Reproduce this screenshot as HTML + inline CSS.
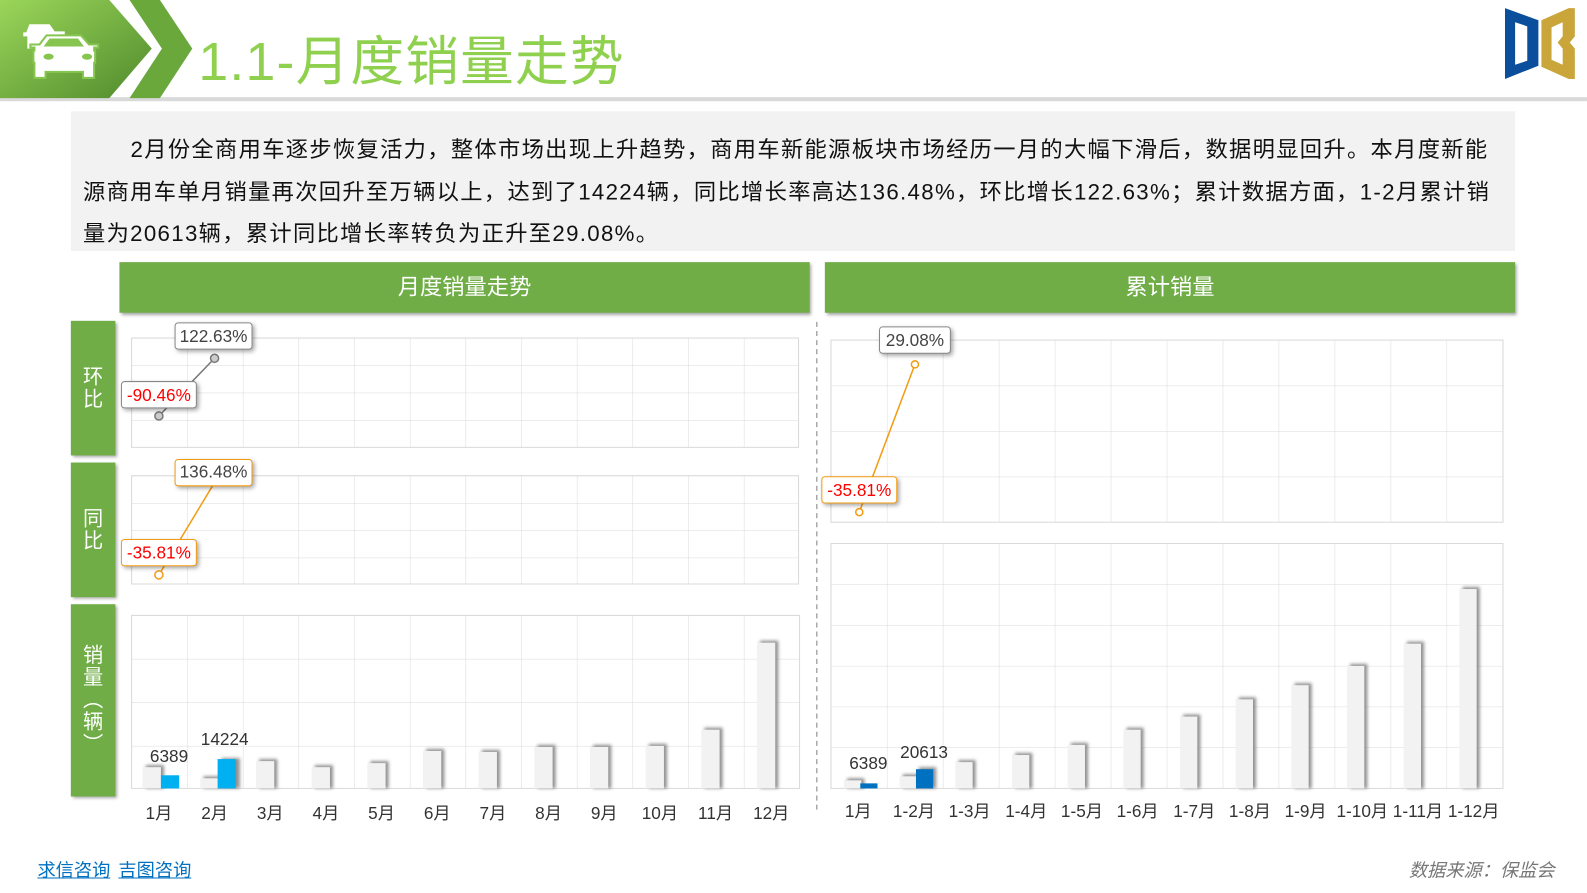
<!DOCTYPE html>
<html><head><meta charset="utf-8">
<style>
body{margin:0;width:1587px;height:892px;background:#fff;position:relative;overflow:hidden;font-family:"Liberation Sans","Noto Sans CJK SC",sans-serif;}
#w{position:absolute;left:0;top:0;width:1568px;height:882px;transform:scale(1.0121);transform-origin:0 0;}
.abs{position:absolute}
.txt{left:70px;top:110px;width:1427px;height:138px;background:#f2f2f2;}
.txt p{margin:0;position:absolute;left:12px;top:17px;white-space:nowrap;font-size:22px;line-height:41.5px;color:#111;letter-spacing:1.3px;}
.hdr{background:#70ad47;color:#fff;font-size:22px;text-align:center;line-height:50px;box-shadow:2px 2px 3px rgba(0,0,0,.35);}
.side{background:#70ad47;color:#fff;font-size:20px;width:44px;text-align:center;line-height:22px;display:flex;align-items:center;justify-content:center;box-shadow:2px 2px 3px rgba(0,0,0,.35);}
</style></head><body><div id="w">
<svg class="abs" style="left:0;top:0" width="1568" height="110">
<defs><linearGradient id="g" x1="0" y1="0" x2="1" y2="1"><stop offset="0" stop-color="#9bd65a"/><stop offset="1" stop-color="#4f8a2c"/></linearGradient></defs>
<rect x="0" y="96" width="1568" height="4" fill="#d9d9d9"/>
<polygon points="0,0 108,0 150,48 108,97 0,97" fill="url(#g)"/>
<polygon points="128,0 158,0 190,48 158,97 128,97 160,48" fill="#6aa83c"/>
<g fill="#fff">
<path d="M29 24 h20 l5 7 h10 v3 h-4 v14 h-6 v-3 h-22 v3 h-5 v-12 h-4 v-4 h3z"/>
<path d="M46 35 h34 l8 9 h9 v3 h-4 v3 h1 v12 h-1 v15 h-11 v-6 h-37 v6 h-11 v-15 h-1 v-12 h1 v-3 h-4 v-3 h9z" stroke="#86c54f" stroke-width="2"/>
<path d="M49 38 h28 l6 8 h-40z" fill="#86c54f"/>
<ellipse cx="48" cy="56" rx="5" ry="3" fill="#86c54f"/><ellipse cx="86" cy="56" rx="5" ry="3" fill="#86c54f"/>
</g>
<text x="196" y="79" font-size="53" letter-spacing="1.2" fill="#8fd14f" font-family="Liberation Sans,Noto Sans CJK SC,sans-serif">1.1-月度销量走势</text>
<path d="M1487 8 l33 12 v45 l-33 13z M1497 22 v42 l12 -4 v-34z" fill="#0b4f9c" fill-rule="evenodd"/>
<path d="M1523 20 l27 -12 h6 v28 l-5 6 l5 6 v30 h-6 l-27 -12z M1533 27 v32 l11 5 v-16 l-5 -6 l5 -6 v-14z" fill="#c9a53a" fill-rule="evenodd"/>
</svg>
<div class="abs txt"><p><span style="display:inline-block;width:47px"></span>2月份全商用车逐步恢复活力，整体市场出现上升趋势，商用车新能源板块市场经历一月的大幅下滑后，数据明显回升。本月度新能<br>源商用车单月销量再次回升至万辆以上，达到了14224辆，同比增长率高达136.48%，环比增长122.63%；累计数据方面，1-2月累计销<br>量为20613辆，累计同比增长率转负为正升至29.08%。</p></div>
<div class="abs hdr" style="left:118px;top:259px;width:682px;height:50px">月度销量走势</div>
<div class="abs hdr" style="left:815px;top:259px;width:682px;height:50px">累计销量</div>
<div class="abs side" style="left:70px;top:317px;height:133px">环<br>比</div>
<div class="abs side" style="left:70px;top:457px;height:133px">同<br>比</div>
<div class="abs side" style="left:70px;top:597px;height:190px">销<br>量<br>︵<br>辆<br>︶</div>
<svg class="abs" style="left:0;top:310px" width="1568" height="510" viewBox="0 310 1568 510">
<defs>
<pattern id="p1" x="130" y="334" width="55" height="27" patternUnits="userSpaceOnUse"><path d="M0 0 V27 M0 0 H55" stroke="#d9d9d9" fill="none"/></pattern>
<pattern id="p2" x="130" y="470" width="55" height="27" patternUnits="userSpaceOnUse"><path d="M0 0 V27 M0 0 H55" stroke="#d9d9d9" fill="none"/></pattern>
<pattern id="p3" x="130" y="608" width="55" height="43" patternUnits="userSpaceOnUse"><path d="M0 0 V43 M0 0 H55" stroke="#d9d9d9" fill="none"/></pattern>
<pattern id="p4" x="821" y="336" width="55.3" height="45" patternUnits="userSpaceOnUse"><path d="M0 0 V45 M0 0 H55.3" stroke="#d9d9d9" fill="none"/></pattern>
<pattern id="p5" x="821" y="537" width="55.3" height="40.3" patternUnits="userSpaceOnUse"><path d="M0 0 V40.3 M0 0 H55.3" stroke="#d9d9d9" fill="none"/></pattern>
<filter id="sh"><feGaussianBlur stdDeviation="1.5"/></filter>
</defs>
<rect x="130" y="334" width="659" height="108" fill="url(#p1)" stroke="#d9d9d9"/>
<rect x="130" y="470" width="659" height="107" fill="url(#p2)" stroke="#d9d9d9"/>
<rect x="130" y="608" width="660" height="171" fill="url(#p3)" stroke="#d9d9d9"/>
<rect x="821" y="336" width="664" height="180" fill="url(#p4)" stroke="#d9d9d9"/>
<rect x="821" y="537" width="664" height="242" fill="url(#p5)" stroke="#d9d9d9"/>
<line x1="807" y1="318" x2="807" y2="800" stroke="#aaa" stroke-width="1.5" stroke-dasharray="5,4"/>
<g fill="#777" filter="url(#sh)" opacity=".8">
<rect x="144" y="756" width="18" height="23"/><rect x="201" y="767" width="18" height="12"/><rect x="256" y="750" width="18" height="29"/><rect x="311" y="756" width="18" height="23"/><rect x="366" y="752" width="18" height="27"/><rect x="421" y="740" width="18" height="39"/><rect x="476" y="741" width="18" height="38"/><rect x="531" y="736" width="18" height="43"/><rect x="586" y="736" width="18" height="43"/><rect x="641" y="735" width="18" height="44"/><rect x="696" y="719" width="18" height="60"/><rect x="751" y="633" width="18" height="146"/>
<rect x="219" y="749" width="18" height="30"/>
</g>
<g fill="#f2f2f2">
<rect x="141" y="758" width="18" height="21"/><rect x="198" y="769" width="18" height="10"/><rect x="253" y="752" width="18" height="27"/><rect x="308" y="758" width="18" height="21"/><rect x="363" y="754" width="18" height="25"/><rect x="418" y="742" width="18" height="37"/><rect x="473" y="743" width="18" height="36"/><rect x="528" y="738" width="18" height="41"/><rect x="583" y="738" width="18" height="41"/><rect x="638" y="737" width="18" height="42"/><rect x="693" y="721" width="18" height="58"/><rect x="748" y="635" width="18" height="144"/>
</g>
<rect x="159" y="766" width="18" height="13" fill="#00b0f0"/>
<rect x="215" y="750" width="18" height="29" fill="#00b0f0"/>
<g fill="#777" filter="url(#sh)" opacity=".8">
<rect x="837" y="769" width="17" height="10"/><rect x="892" y="765" width="17" height="14"/><rect x="947" y="751" width="17" height="28"/><rect x="1003" y="744" width="17" height="35"/><rect x="1058" y="734" width="17" height="45"/><rect x="1113" y="719" width="17" height="60"/><rect x="1169" y="706" width="17" height="73"/><rect x="1224" y="689" width="17" height="90"/><rect x="1279" y="675" width="17" height="104"/><rect x="1334" y="656" width="17" height="123"/><rect x="1390" y="634" width="17" height="145"/><rect x="1445" y="580" width="17" height="199"/><rect x="908" y="758" width="17" height="21"/>
</g>
<g fill="#f2f2f2">
<rect x="834" y="771" width="17" height="8"/><rect x="889" y="767" width="17" height="12"/><rect x="944" y="753" width="17" height="26"/><rect x="1000" y="746" width="17" height="33"/><rect x="1055" y="736" width="17" height="43"/><rect x="1110" y="721" width="17" height="58"/><rect x="1166" y="708" width="17" height="71"/><rect x="1221" y="691" width="17" height="88"/><rect x="1276" y="677" width="17" height="102"/><rect x="1331" y="658" width="17" height="121"/><rect x="1387" y="636" width="17" height="143"/><rect x="1442" y="582" width="17" height="197"/>
</g>
<rect x="850" y="774" width="17" height="5" fill="#0070c0"/>
<rect x="905" y="760" width="17" height="19" fill="#0070c0"/>
<g font-size="17" fill="#333" text-anchor="middle">
<text x="167" y="753">6389</text><text x="222" y="736">14224</text>
<text x="858" y="760">6389</text><text x="913" y="749">20613</text>
</g>
<g font-size="17" fill="#333" text-anchor="middle" font-family="Liberation Sans,Noto Sans CJK SC,sans-serif">
<text x="157" y="809">1月</text><text x="212" y="809">2月</text><text x="267" y="809">3月</text><text x="322" y="809">4月</text><text x="377" y="809">5月</text><text x="432" y="809">6月</text><text x="487" y="809">7月</text><text x="542" y="809">8月</text><text x="597" y="809">9月</text><text x="652" y="809">10月</text><text x="707" y="809">11月</text><text x="762" y="809">12月</text>
<text x="848" y="807">1月</text><text x="903" y="807">1-2月</text><text x="958" y="807">1-3月</text><text x="1014" y="807">1-4月</text><text x="1069" y="807">1-5月</text><text x="1124" y="807">1-6月</text><text x="1180" y="807">1-7月</text><text x="1235" y="807">1-8月</text><text x="1290" y="807">1-9月</text><text x="1346" y="807">1-10月</text><text x="1401" y="807">1-11月</text><text x="1456" y="807">1-12月</text>
</g>
<polyline points="157,411 212,354" fill="none" stroke="#777" stroke-width="1.5"/>
<polyline points="157,568 210,480" fill="none" stroke="#f39c12" stroke-width="1.5"/>
<polyline points="849,506 904,360" fill="none" stroke="#f39c12" stroke-width="1.5"/>
<circle cx="157" cy="411" r="4" fill="#ccc" stroke="#777" stroke-width="1.5"/>
<circle cx="212" cy="354" r="4" fill="#ccc" stroke="#777" stroke-width="1.5"/>
<circle cx="157" cy="568" r="4" fill="#fff" stroke="#f39c12" stroke-width="1.5"/>
<circle cx="849" cy="506" r="3.5" fill="#fff" stroke="#f39c12" stroke-width="1.5"/>
<circle cx="904" cy="360" r="3.5" fill="#fff" stroke="#f39c12" stroke-width="1.5"/>
<g font-size="17" text-anchor="middle">
<rect x="173" y="319" width="76" height="26" rx="3" fill="#fff" stroke="#888" style="filter:drop-shadow(2px 2px 2px rgba(0,0,0,.35))"/><text x="211" y="338" fill="#444">122.63%</text>
<rect x="120" y="377" width="74" height="26" rx="3" fill="#fff" stroke="#888" style="filter:drop-shadow(2px 2px 2px rgba(0,0,0,.35))"/><text x="157" y="396" fill="#f00">-90.46%</text>
<rect x="173" y="454" width="76" height="26" rx="3" fill="#fff" stroke="#f39c12" style="filter:drop-shadow(2px 2px 2px rgba(0,0,0,.35))"/><text x="211" y="472" fill="#444">136.48%</text>
<rect x="120" y="533" width="74" height="26" rx="3" fill="#fff" stroke="#f39c12" style="filter:drop-shadow(2px 2px 2px rgba(0,0,0,.35))"/><text x="157" y="552" fill="#f00">-35.81%</text>
<rect x="869" y="323" width="70" height="26" rx="3" fill="#fff" stroke="#888" style="filter:drop-shadow(2px 2px 2px rgba(0,0,0,.35))"/><text x="904" y="342" fill="#444">29.08%</text>
<rect x="812" y="471" width="74" height="26" rx="3" fill="#fff" stroke="#f39c12" style="filter:drop-shadow(2px 2px 2px rgba(0,0,0,.35))"/><text x="849" y="490" fill="#f00">-35.81%</text>
</g>
</svg>
<div class="abs" style="left:37px;top:846px;font-size:18px;color:#0070c0;text-decoration:underline">求信咨询</div>
<div class="abs" style="left:117px;top:846px;font-size:18px;color:#0070c0;text-decoration:underline">吉图咨询</div>
<div class="abs" style="left:1392px;top:846px;font-size:18px;color:#777;font-style:italic">数据来源：保监会</div>
</div></body></html>
